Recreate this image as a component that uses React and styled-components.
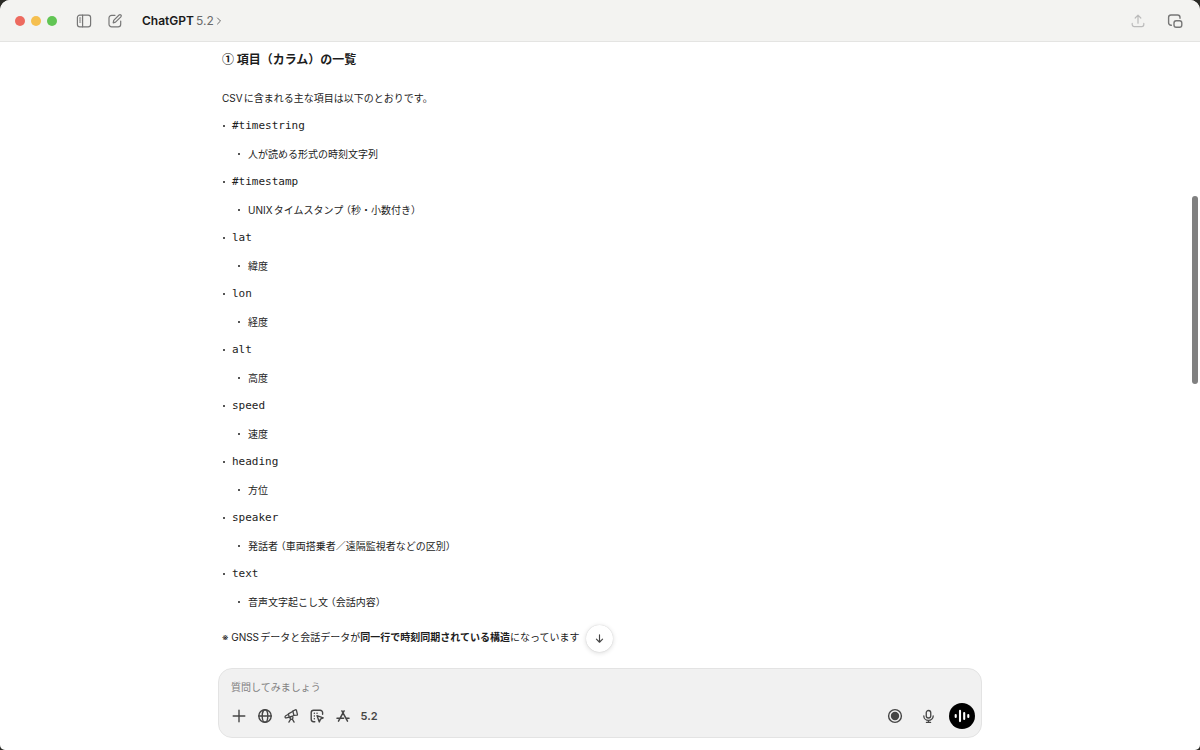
import React from 'react'
import styled, { createGlobalStyle, css } from 'styled-components'

const GlobalStyle = createGlobalStyle`
  * {
    box-sizing: border-box;
  }
  body {
    margin: 0;
    background: #2a2a26;
    color: #1c1c1c;
    font-family: Inter, 'Noto Sans CJK JP', sans-serif;
    font-size: 10px;
  }
  button {
    border: none;
    padding: 0;
    background: none;
    font-family: inherit;
    cursor: pointer;
  }
`;

const Window = styled.div`
  display: flex;
  flex-direction: column;
  height: 100vh;
  overflow: hidden;
  background: #fff;
  border-radius: 10px 10px 5px 5px;
`;

const TitleBar = styled.header`
  display: flex;
  flex-shrink: 0;
  align-items: center;
  height: 42px;
  padding: 0 13px 0 15px;
  background: #f3f3f1;
  border-bottom: 1px solid #e4e4e2;
`;

const Lights = styled.div`
  display: flex;
  gap: 6px;
  margin-right: 15px;
`;

const Light = styled.button`
  width: 10px;
  height: 10px;
  border-radius: 50%;
  background: ${(p) => p.$color};
`;

const IconButton = styled.button`
  display: flex;
  align-items: center;
  justify-content: center;
  width: 24px;
  height: 24px;
  color: ${(p) => p.$color || '#454545'};
`;

const BarGroup = styled.div`
  display: flex;
  gap: ${(p) => p.$gap};
`;

const ModelButton = styled.button`
  display: flex;
  align-items: center;
  gap: 2px;
  margin: 0 auto 0 15px;
  font-size: 12px;
  line-height: 16px;
  color: #6a6a6a;
`;

const ModelName = styled.span`
  font-weight: 600;
  color: #1a1a1a;
`;

const Main = styled.main`
  position: relative;
  flex: 1;
  min-height: 0;
  overflow: hidden;
`;

const Article = styled.article`
  max-width: 764px;
  margin: 0 auto;
  padding: 3px 4px;
  line-height: 28px;
  text-autospace: normal;
`;

const Heading = styled.h2`
  margin: 0 0 11px;
  font-family: 'Noto Sans CJK JP', sans-serif;
  font-size: 12px;
  font-weight: 700;
  line-height: 28px;
`;

const Paragraph = styled.p`
  margin: 0;
`;

const Note = styled(Paragraph)`
  margin-top: 7px;
`;

const bullet = css`
  &::before {
    content: '';
    flex-shrink: 0;
    width: 2px;
    height: 2px;
    border-radius: 1px;
    background: #1c1c1c;
  }
`;

const List = styled.ul`
  margin: 0;
  padding: 0;
  list-style: none;
`;

const Row = styled.div`
  display: flex;
  align-items: center;
  gap: ${(p) => (p.$nested ? '8px' : '7px')};
  height: 28px;
  padding-left: ${(p) => (p.$nested ? '16px' : '1px')};
  ${bullet}
`;

const Code = styled.code`
  font-family: 'DejaVu Sans Mono', monospace;
  font-size: 11px;
`;

const Paren = styled.span`
  font-feature-settings: 'halt';
`;

const JumpButton = styled.button`
  position: absolute;
  bottom: 16px;
  left: 50%;
  display: flex;
  align-items: center;
  justify-content: center;
  width: 27px;
  height: 27px;
  margin-left: -14px;
  border-radius: 50%;
  background: #fff;
  box-shadow: 0 0 1px rgba(0, 0, 0, 0.2), 0 1px 5px rgba(0, 0, 0, 0.15);
  color: #454545;
`;

const ScrollThumb = styled.div`
  position: absolute;
  top: 154px;
  right: 2px;
  width: 6px;
  height: 188px;
  border-radius: 3px;
  background: #808080;
`;

const Composer = styled.form`
  flex-shrink: 0;
  width: calc(100% - 24px);
  max-width: 764px;
  margin: 0 auto 12px;
  padding: 7px 6px 8px 8px;
  background: #f1f1f1;
  border: 1px solid #e3e3e3;
  border-radius: 14px;
`;

const Prompt = styled.input`
  display: block;
  width: 100%;
  height: 22px;
  margin-bottom: 5px;
  padding: 0 4px;
  border: none;
  outline: none;
  background: none;
  font-family: inherit;
  font-size: 10px;
  &::placeholder {
    color: #808080;
  }
`;

const Tools = styled.div`
  display: flex;
  align-items: center;
  justify-content: space-between;
`;

const ToolGroup = styled.div`
  display: flex;
  align-items: center;
  gap: ${(p) => p.$gap};
`;

const VersionButton = styled(IconButton)`
  font-size: 11px;
  font-weight: 600;
`;

const VoiceButton = styled(IconButton)`
  width: 26px;
  height: 26px;
  border-radius: 50%;
  background: #000;
  color: #fff;
`;

const Icon = ({ size = 16, width = 1.4, children }) => (
  <svg
    width={size}
    height={size}
    viewBox="0 0 16 16"
    fill="none"
    stroke="currentColor"
    strokeWidth={width}
    strokeLinecap="round"
    strokeLinejoin="round"
    aria-hidden="true"
  >
    {children}
  </svg>
);

const SidebarIcon = () => (
  <Icon width="1.2">
    <rect x="1.4" y="2.2" width="13.2" height="11.6" rx="2.4" />
    <path d="M6.6 2.2v11.6M3.5 5h1.2M3.5 7h1.2M3.5 9h1.2" />
  </Icon>
);

const ComposeIcon = () => (
  <Icon width="1.2">
    <path d="M8 2.3H4.6a2.6 2.6 0 0 0-2.6 2.6v6.3a2.6 2.6 0 0 0 2.6 2.6h6.5a2.6 2.6 0 0 0 2.6-2.6V8" />
    <path d="M6.2 9.8l.5-2.4 5.4-5.4a1.2 1.2 0 0 1 1.8 1.8L8.5 9.2z" />
  </Icon>
);

const ShareIcon = () => (
  <Icon width="1.2">
    <path d="M8 10.2V2.4M5.2 5L8 2.2 10.8 5M2.2 10.4v1.2a2 2 0 0 0 2 2h7.6a2 2 0 0 0 2-2v-1.2" />
  </Icon>
);

const WindowIcon = () => (
  <Icon width="1.4">
    <path d="M4.4 12.2H4a2.4 2.4 0 0 1-2.4-2.4V4.4A2.4 2.4 0 0 1 4 2h6.6A2.4 2.4 0 0 1 13 4.4v.9" />
    <rect x="7" y="7.8" width="7.8" height="6.4" rx="2.2" />
  </Icon>
);

const ChevronIcon = () => (
  <svg width="6" height="8" viewBox="0 0 6 8" fill="none" stroke="currentColor" strokeLinecap="round" strokeLinejoin="round" aria-hidden="true">
    <path d="M1.5 1l3 3-3 3" />
  </svg>
);

const ArrowDownIcon = () => (
  <Icon size={13}>
    <path d="M8 3.4v9M4.2 8.8L8 12.6l3.8-3.8" />
  </Icon>
);

const PlusIcon = () => (
  <Icon>
    <path d="M8 2.2v11.6M2.2 8h11.6" />
  </Icon>
);

const GlobeIcon = () => (
  <Icon>
    <circle cx="8" cy="8" r="6.2" />
    <ellipse cx="8" cy="8" rx="2.8" ry="6.2" />
    <path d="M1.8 8h12.4" />
  </Icon>
);

const TelescopeIcon = () => (
  <Icon width="1.3">
    <path d="M9.8 3l2.6-1.2q.8-.3 1 .4l1 4.1q.2.8-.6.9l-2.9.2z" />
    <path d="M10 3.3L5.4 5.9l.9 3.6 4.5-2M5.5 6.3L2.7 7.8q-.9.5-.6 1.4.3.9 1.2.7l3-.7" />
    <circle cx="8.5" cy="9.8" r="1.5" />
    <path d="M7.7 11.2l-1.8 2.9M9.3 11.2l1.8 2.9" />
  </Icon>
);

const AgentIcon = () => (
  <Icon>
    <path d="M5.8 13.7H4.6A2.4 2.4 0 0 1 2.2 11.3V4.6a2.4 2.4 0 0 1 2.4-2.4h6.6a2.4 2.4 0 0 1 2.4 2.4v1.6" />
    <path d="M8 7.6l6.2 2.2-2.7 1.3-1.2 2.8z" />
    <path d="M5.3 5.3h.1M8 5.3h.1M5.3 8h.1M5.3 10.7h.1" />
  </Icon>
);

const AppsIcon = () => (
  <Icon width="1.5">
    <path d="M6.9 2.8l5.6 10.4M9.1 2.8L3.5 13.2M2 10.3h6.6M11.3 10.3H14" />
  </Icon>
);

const RecordIcon = () => (
  <Icon>
    <circle cx="8" cy="8" r="6.4" />
    <circle cx="8" cy="8" r="4.2" fill="currentColor" stroke="none" />
  </Icon>
);

const MicIcon = () => (
  <Icon size={15}>
    <rect x="5.6" y="1.6" width="4.8" height="8" rx="2.4" />
    <path d="M3 7.4a5 4.8 0 0 0 10 0M8 12.2v2M5.8 14.3h4.4" />
  </Icon>
);

const VoiceIcon = () => (
  <Icon width="2.1">
    <path d="M1.7 7v2M6 2.9v10.2M10.2 5v6M14.3 7v2" />
  </Icon>
);

const fields = [
  { name: '#timestring', text: '人が読める形式の時刻文字列' },
  { name: '#timestamp', text: 'UNIXタイムスタンプ', note: '秒・小数付き' },
  { name: 'lat', text: '緯度' },
  { name: 'lon', text: '経度' },
  { name: 'alt', text: '高度' },
  { name: 'speed', text: '速度' },
  { name: 'heading', text: '方位' },
  { name: 'speaker', text: '発話者', note: '車両搭乗者／遠隔監視者などの区別' },
  { name: 'text', text: '音声文字起こし文', note: '会話内容' },
];

const Field = ({ name, text, note }) => (
  <li>
    <Row>
      <Code>{name}</Code>
    </Row>
    <List>
      <li>
        <Row $nested>
          <span>
            {text}
            {note && (
              <>
                {' '}
                <Paren>（</Paren>
                {note}
                <Paren>）</Paren>
              </>
            )}
          </span>
        </Row>
      </li>
    </List>
  </li>
);

const App = () => {
  return (
    <>
      <GlobalStyle />
      <Window>
        <TitleBar>
          <Lights>
            <Light $color="#ed6a5f" aria-label="閉じる" />
            <Light $color="#f5bf4f" aria-label="しまう" />
            <Light $color="#61c554" aria-label="拡大" />
          </Lights>
          <BarGroup $gap="7px">
            <IconButton $color="#777" aria-label="サイドバー"><SidebarIcon /></IconButton>
            <IconButton $color="#777" aria-label="新しいチャット"><ComposeIcon /></IconButton>
          </BarGroup>
          <ModelButton>
            <ModelName>ChatGPT</ModelName>
            <span>5.2</span>
            <ChevronIcon />
          </ModelButton>
          <BarGroup $gap="13px">
            <IconButton $color="#bbb" aria-label="共有"><ShareIcon /></IconButton>
            <IconButton $color="#777" aria-label="別ウインドウで開く"><WindowIcon /></IconButton>
          </BarGroup>
        </TitleBar>

        <Main>
          <Article>
            <Heading>① 項目（カラム）の一覧</Heading>
            <Paragraph>CSVに含まれる主な項目は以下のとおりです。</Paragraph>
            <List>
              {fields.map((field) => (
                <Field key={field.name} {...field} />
              ))}
            </List>
            <Note>
              ※ GNSSデータと会話データが<strong>同一行で時刻同期されている構造</strong>になっています
            </Note>
          </Article>
          <JumpButton aria-label="一番下へ"><ArrowDownIcon /></JumpButton>
          <ScrollThumb />
        </Main>

        <Composer onSubmit={(e) => e.preventDefault()}>
          <Prompt type="text" placeholder="質問してみましょう" aria-label="質問" />
          <Tools>
            <ToolGroup $gap="2px">
              <IconButton type="button" aria-label="追加"><PlusIcon /></IconButton>
              <IconButton type="button" aria-label="検索"><GlobeIcon /></IconButton>
              <IconButton type="button" aria-label="調査"><TelescopeIcon /></IconButton>
              <IconButton type="button" aria-label="エージェント"><AgentIcon /></IconButton>
              <IconButton type="button" aria-label="アプリ"><AppsIcon /></IconButton>
              <VersionButton type="button">5.2</VersionButton>
            </ToolGroup>
            <ToolGroup $gap="9px">
              <IconButton type="button" aria-label="録音"><RecordIcon /></IconButton>
              <IconButton type="button" aria-label="音声入力"><MicIcon /></IconButton>
              <VoiceButton type="button" aria-label="音声モード"><VoiceIcon /></VoiceButton>
            </ToolGroup>
          </Tools>
        </Composer>
      </Window>
    </>
  )
}

export default App
